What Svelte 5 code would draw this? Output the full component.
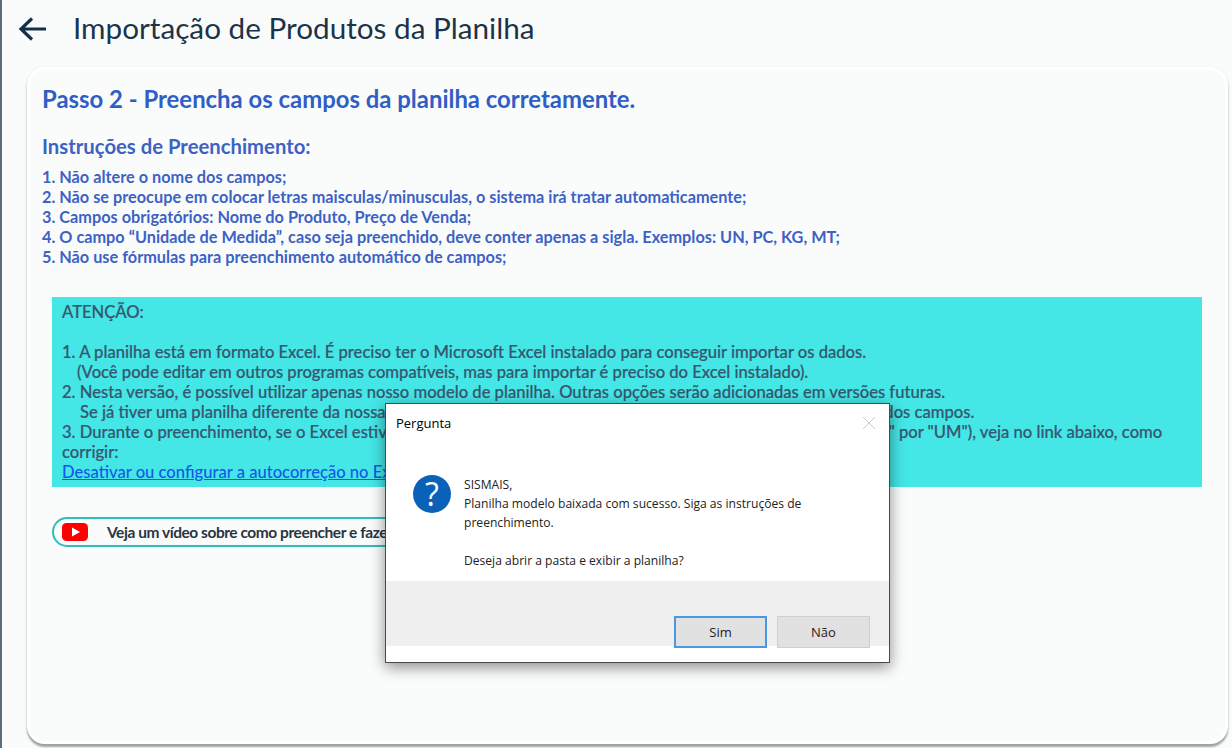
<script>
  const rules = [
    'Não altere o nome dos campos;',
    'Não se preocupe em colocar letras maisculas/minusculas, o sistema irá tratar automaticamente;',
    'Campos obrigatórios: Nome do Produto, Preço de Venda;',
    'O campo “Unidade de Medida”, caso seja preenchido, deve conter apenas a sigla. Exemplos: UN, PC, KG, MT;',
    'Não use fórmulas para preenchimento automático de campos;'
  ];
</script>

<div class="page">
  <header class="top">
    <svg class="back" width="30" height="26" viewBox="0 0 30 26" fill="none" stroke="#17304a" stroke-width="3.2">
      <path d="M28 13H3M14 2.5 3 13l11 10.5" />
    </svg>
    <h1>Importação de Produtos da Planilha</h1>
  </header>

  <main class="card">
    <h2>Passo 2 - Preencha os campos da planilha corretamente.</h2>
    <h3>Instruções de Preenchimento:</h3>
    <div class="rules">
      {#each rules as rule, i}
        <div>{i + 1}. {rule}</div>
      {/each}
    </div>

    <section class="notice">
      <div>ATENÇÃO:</div>
      <br />
      <div>1. A planilha está em formato Excel. É preciso ter o Microsoft Excel instalado para conseguir importar os dados.</div>
      <div class="indent1">(Você pode editar em outros programas compatíveis, mas para importar é preciso do Excel instalado).</div>
      <div>2. Nesta versão, é possível utilizar apenas nosso modelo de planilha. Outras opções serão adicionadas em versões futuras.</div>
      <div class="indent2">Se já tiver uma planilha diferente da nossa, copie e cole as informações no nosso modelo, respeitando a ordem dos campos.</div>
      <div>3. Durante o preenchimento, se o Excel estiver com a autocorreção habilitada e alterar algum valor (ex: trocar "UN" por "UM"), veja no link abaixo, como corrigir:</div>
      <a href="#autocorrecao">Desativar ou configurar a autocorreção no Excel</a>
    </section>

    <div class="video">
      <svg width="26" height="18" viewBox="0 0 26 18">
        <rect width="26" height="18" rx="4.5" fill="#f00" />
        <path d="M10 4.6 18 9l-8 4.4z" fill="#fff" />
      </svg>
      <span>Veja um vídeo sobre como preencher e fazer a importação da planilha</span>
    </div>
  </main>

  <div class="dialog">
    <div class="dialog-title">
      <span>Pergunta</span>
      <svg width="14" height="14" viewBox="0 0 14 14" stroke="#c9c9c9" stroke-width="1" fill="none">
        <path d="M1 1l12 12M13 1 1 13" />
      </svg>
    </div>
    <div class="dialog-body">
      <div class="question">?</div>
      <div class="message">
        <div>SISMAIS,</div>
        <div>Planilha modelo baixada com sucesso. Siga as instruções de preenchimento.</div>
        <br />
        <div>Deseja abrir a pasta e exibir a planilha?</div>
      </div>
    </div>
    <div class="dialog-actions">
      <button class="primary">Sim</button>
      <button>Não</button>
    </div>
  </div>
</div>

<style>
  :global(body) {
    margin: 0;
    background: #fafcfc;
  }
  .page {
    box-sizing: border-box;
    position: relative;
    width: 1232px;
    height: 748px;
    overflow: hidden;
    border-left: 2px solid #5b6c7e;
    padding: 0 4px 4px 25px;
    display: flex;
    flex-direction: column;
    font-family: Lato, sans-serif;
    background: #fafcfc;
  }
  .top {
    height: 67px;
    flex: none;
    display: flex;
    align-items: center;
    gap: 25px;
    margin-left: -9px;
    padding-bottom: 9px;
    box-sizing: border-box;
  }
  h1 {
    margin: -3px 0 0;
    font-size: 29.7px;
    font-weight: 400;
    color: #1d3348;
  }
  .card {
    flex: 1;
    box-sizing: border-box;
    border: 3px solid #fff;
    border-radius: 18px;
    background: #fafcfc;
    box-shadow: 0 3px 2px rgba(70, 80, 80, 0.5), 0 0 3px rgba(120, 130, 140, 0.12);
    padding: 15px 22px 0 12px;
  }
  h2 {
    margin: 0;
    font-size: 23.9px;
    line-height: 28px;
    font-weight: 700;
    color: #2f5fc4;
  }
  h3 {
    margin: 20px 0 0;
    font-size: 20.3px;
    line-height: 26px;
    font-weight: 700;
    color: #3d62c4;
  }
  .rules {
    margin-top: 8px;
    font-size: 16.3px;
    line-height: 20px;
    font-weight: 700;
    color: #3d62c4;
  }
  .notice {
    margin: 30px 1px 0 10px;
    height: 190px;
    box-sizing: border-box;
    background: #45e6e6;
    padding: 5px 10px;
    font-size: 16.6px;
    line-height: 20px;
    color: #37566f;
    font-weight: 500;
    -webkit-text-stroke: 0.2px #37566f;
    overflow: hidden;
  }
  .notice br {
    display: block;
    content: '';
    height: 20px;
  }
  .indent1 {
    padding-left: 15px;
  }
  .indent2 {
    padding-left: 18px;
  }
  .notice a {
    color: #1558e8;
    -webkit-text-stroke: 0;
    text-decoration: underline;
  }
  .video {
    margin: 30px 0 0 10px;
    width: 520px;
    height: 30px;
    box-sizing: border-box;
    border: 2.5px solid #2fbdbd;
    border-radius: 15px;
    display: flex;
    align-items: center;
    gap: 19px;
    padding-left: 8px;
    font-size: 15.5px;
    letter-spacing: -0.45px;
    font-weight: 700;
    color: #2a3540;
    white-space: nowrap;
  }
  .back {
    flex: none;
  }
  .dialog {
    position: absolute;
    left: 383px;
    top: 403px;
    width: 505px;
    height: 260px;
    box-sizing: border-box;
    border: 1px solid #4a4a4a;
    background: #fff;
    box-shadow: 0 4px 14px rgba(0, 0, 0, 0.45);
    font-family: 'Open Sans', sans-serif;
    font-size: 12.1px;
    color: #222;
    display: flex;
    flex-direction: column;
  }
  .dialog-title {
    height: 37px;
    flex: none;
    display: flex;
    align-items: center;
    justify-content: space-between;
    padding: 0 13px 0 10px;
    font-size: 13px;
    color: #000;
  }
  .dialog-body {
    height: 140px;
    flex: none;
    box-sizing: border-box;
    padding: 34px 40px 0 27px;
    display: flex;
    gap: 13px;
  }
  .question {
    width: 38px;
    height: 38px;
    flex: none;
    border-radius: 50%;
    background: #0a62b8;
    color: #fff;
    font-size: 32px;
    line-height: 38px;
    text-align: center;
  }
  .message {
    line-height: 19px;
  }
  .message br {
    display: block;
    content: '';
    height: 19px;
  }
  .dialog-actions {
    height: 65px;
    flex: none;
    box-sizing: border-box;
    background: #efefef;
    display: flex;
    justify-content: flex-end;
    align-items: flex-end;
    gap: 10px;
    padding-right: 19px;
  }
  button {
    width: 93px;
    height: 32px;
    margin-bottom: -2px;
    border: 1px solid #cfcfcf;
    background: #e1e1e1;
    font: inherit;
    font-size: 13px;
    color: #222;
    padding: 0;
  }
  .primary {
    border: 2px solid #4a98e0;
  }
</style>
